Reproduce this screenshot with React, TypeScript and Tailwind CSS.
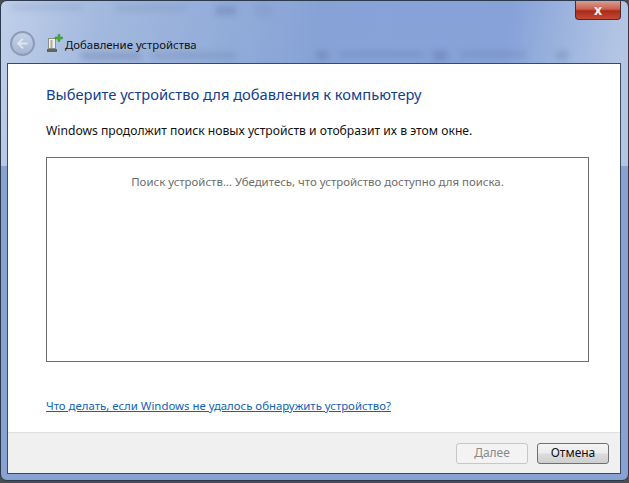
import { ArrowLeft } from "lucide-react";

const FONT = "font-['Noto_Sans','Open_Sans',sans-serif]";

function DeviceIcon() {
  return (
    <svg width="17" height="19" viewBox="0 0 17 19" className="shrink-0">
      <rect x="2.5" y="4.5" width="7" height="10" fill="#eef0ea" stroke="#8a8f88" />
      <rect x="4.5" y="6" width="2" height="8" fill="#a9ae9f" />
      <path d="M1 15h10v3H1z" fill="#62655f" />
      <path d="M9 3h3V0.5h2V3h2.5v2H14v2.5h-2V5H9z" fill="#3fae35" stroke="#2c7d27" strokeWidth="0.4" />
    </svg>
  );
}

function BlurredBackdrop() {
  return (
    <div className="absolute inset-0 pointer-events-none blur-[3px]">
      <div className="absolute left-[10px] top-[4px] w-[70px] h-[4px] bg-[#5a6f9c]/25" />
      <div className="absolute left-[115px] top-[5px] w-[70px] h-[4px] bg-[#5a6f9c]/25" />
      <div className="absolute left-[215px] top-[5px] w-[20px] h-[9px] bg-[#5a6f9c]/35" />
      <div className="absolute left-[255px] top-[4px] w-[15px] h-[10px] rounded-full border-2 border-[#5a6f9c]/35" />
      <div className="absolute left-[80px] top-[52px] w-[60px] h-[6px] bg-[#5a6f9c]/40" />
      <div className="absolute left-[150px] top-[52px] w-[85px] h-[5px] bg-[#5a6f9c]/30" />
      <div className="absolute left-[315px] top-[50px] w-[12px] h-[8px] bg-[#5a6f9c]/40" />
      <div className="absolute left-[338px] top-[51px] w-[85px] h-[5px] bg-[#5a6f9c]/30" />
      <div className="absolute left-[432px] top-[50px] w-[14px] h-[9px] bg-[#5a6f9c]/40" />
      <div className="absolute left-[460px] top-[51px] w-[65px] h-[5px] bg-[#5a6f9c]/30" />
      <div className="absolute left-[555px] top-[50px] w-[12px] h-[8px] bg-[#5a6f9c]/30" />
    </div>
  );
}

export default function App() {
  return (
    <div className={`${FONT} w-[629px] h-[483px] overflow-hidden bg-[#4a4c50]`}>
      <div className="relative w-full h-[481px] rounded-[7px] border border-[#2c3a4e] bg-[linear-gradient(to_bottom,transparent_165px,#88a2d4_165px),linear-gradient(100deg,#c0d0ea_0%,#a3b9de_14%,#87a3d6_45%,#86a2d8_72%,#b3c5e4_88%,#b5c6e3_100%)] flex flex-col pl-[6px] pr-[7px] pb-[6px]">
        <BlurredBackdrop />
        {/* Title bar */}
        <div className="relative h-[62px] shrink-0 flex flex-col">
          <div className="flex justify-end">
            <div className="w-[46px] h-[19px] rounded-b-[4px] border border-t-0 border-[#4c2c2c] bg-[linear-gradient(#dc9c90_0%,#c9604e_45%,#aa2a18_55%,#c24a36_100%)] flex items-center justify-center">
              <span className="text-[14px] leading-none font-bold text-[#f4eeee]">x</span>
            </div>
          </div>
          <div className="flex items-center mt-[11px] pl-[3px]">
            <div className="w-[25px] h-[25px] rounded-full border-2 border-[#8d9bb4] bg-[linear-gradient(#c4d1e8,#a5b6d4)] flex items-center justify-center">
              <ArrowLeft size={15} strokeWidth={3} className="text-[#dfe6f2]" />
            </div>
            <div className="ml-[11px]">
              <DeviceIcon />
            </div>
            <span className="ml-[2px] mt-[2px] text-[11.4px] leading-none text-[#111]">Добавление устройства</span>
          </div>
        </div>

        {/* Content */}
        <div className="relative flex-1 flex flex-col bg-white border border-[#3b4a63]">
          <div className="flex-1 flex flex-col pl-[38px] pr-[31px] pt-[20px]">
            <h1 className="text-[14.7px] leading-[22px] -mt-[1px] text-[#12408f]">Выберите устройство для добавления к компьютеру</h1>
            <p className="mt-[18px] text-[12.15px] leading-[16px] text-[#111]">
              Windows продолжит поиск новых устройств и отобразит их в этом окне.
            </p>
            <div className="mt-[18px] h-[205px] border border-[#6d6d6d] pt-[16px] text-center text-[11.45px] leading-[16px] text-[#6d6d6d]">
              Поиск устройств... Убедитесь, что устройство доступно для поиска.
            </div>
            <a className="mt-[36px] self-start text-[11.4px] leading-[16px] text-[#0f62b8] underline">
              Что делать, если Windows не удалось обнаружить устройство?
            </a>
          </div>
          <div className="h-[41px] shrink-0 border-t border-[#dfdfdf] bg-[#f0f0f0] flex items-center justify-end gap-[9px] pr-[11px]">
            <button className="w-[72px] h-[21px] rounded-[3px] border border-[#c4c8c8] bg-[#f3f3f3] text-[12px] leading-none text-[#8a8a8a]">
              Далее
            </button>
            <button className="w-[72px] h-[21px] rounded-[3px] border border-[#707070] bg-[linear-gradient(#f4f4f4_0%,#ececec_48%,#dcdcdc_52%,#cfcfcf_100%)] text-[12px] leading-none text-[#111]">
              Отмена
            </button>
          </div>
        </div>
      </div>
    </div>
  );
}
